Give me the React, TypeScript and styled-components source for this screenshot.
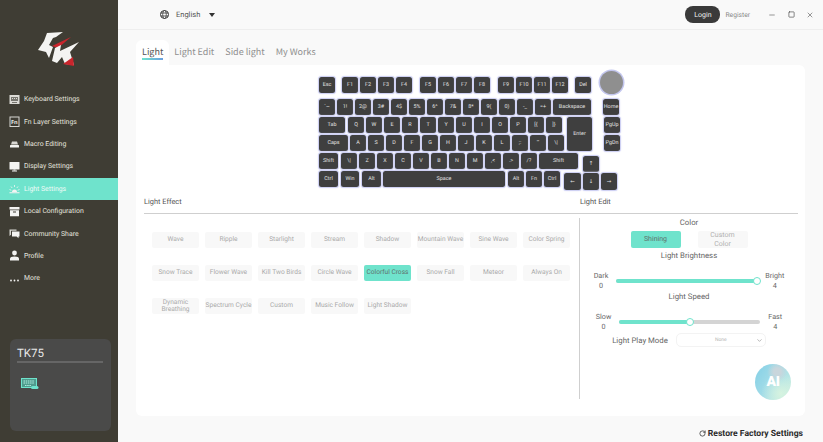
import React from 'react';
import styled, { createGlobalStyle } from 'styled-components';
import { Minus, Square, X, RotateCw, ChevronDown } from 'lucide-react';

const GlobalStyle = createGlobalStyle`
  html, body { margin: 0; padding: 0; background: #f9f9f9; }
  body {
    font-family: Roboto, "DejaVu Sans", sans-serif;
    text-rendering: geometricPrecision;
  }
  button { font-family: inherit; text-rendering: inherit; }
  * { box-sizing: border-box; }
`;

const Page = styled.div`
  display: flex;
  width: 823px;
  height: 442px;
  overflow: hidden;
`;

/* sidebar */
const Sidebar = styled.aside`
  display: flex;
  flex-direction: column;
  flex: none;
  width: 118px;
  height: 100%;
  background: #3f3d34;
  padding-bottom: 11px;
`;

const LogoBox = styled.div`
  display: flex;
  justify-content: center;
  height: 88px;
  padding-top: 31px;
`;

const Nav = styled.nav`
  display: flex;
  flex-direction: column;
`;

const NavItem = styled.div<{ $active?: boolean }>`
  display: flex;
  align-items: center;
  gap: 4px;
  height: 22.4px;
  padding-left: 9px;
  font-size: 6.9px;
  color: ${p => (p.$active ? '#f2fbf8' : '#e4e3de')};
  background: ${p => (p.$active ? '#6fe3cc' : 'transparent')};
  svg { flex: none; }
`;

const DeviceCard = styled.div`
  margin: auto 7px 0 10px;
  height: 92px;
  padding: 6px 7px;
  background: #4a4a49;
  border-radius: 6px;
`;

const DeviceName = styled.div`
  font-size: 11.5px;
  line-height: 16px;
  color: #e8e8e8;
  padding-bottom: 0;
  border-bottom: 2px solid #666;
  margin-bottom: 15px;
  margin-right: 1px;
`;

/* main column */
const Main = styled.main`
  display: flex;
  flex-direction: column;
  flex: 1;
  min-width: 0;
`;

const TopBar = styled.header`
  display: flex;
  align-items: center;
  flex: none;
  height: 30px;
  padding: 0 9px 0 42px;
  border-bottom: 1px solid #eeeeee;
`;

const LangText = styled.span`
  margin-left: 7px;
  font-size: 7.5px;
  color: #555;
`;

const Caret = styled.span`
  margin-left: 9px;
  border-left: 3px solid transparent;
  border-right: 3px solid transparent;
  border-top: 4px solid #333;
`;

const LoginButton = styled.button`
  margin-left: auto;
  width: 35px;
  height: 17px;
  padding: 0;
  border: 0;
  border-radius: 8px;
  background: #3a3a3a;
  color: #f0f0f0;
  font-size: 7px;
`;

const RegisterText = styled.span`
  margin-left: 5px;
  font-size: 6.7px;
  color: #888;
`;

const WindowControls = styled.div`
  display: flex;
  align-items: center;
  gap: 11.5px;
  margin-left: 18px;
  color: #333;
`;

const TabBar = styled.div`
  display: flex;
  flex: none;
  height: 35px;
  padding: 10px 0 0 18px;
`;

const Tab = styled.div<{ $active?: boolean }>`
  position: relative;
  padding: 5px 6px 0;
  height: 25px;
  margin-right: -1px;
  font-family: "Noto Sans CJK SC", "Noto Sans", sans-serif;
  font-size: 9px;
  line-height: 13px;
  color: ${p => (p.$active ? '#555' : '#8f8f8f')};
  background: ${p => (p.$active ? '#fff' : 'transparent')};
  border-radius: 6px 6px 0 0;
  ${p =>
    p.$active &&
    `&::after {
      content: "";
      position: absolute;
      left: 6px;
      right: 6px;
      top: 18px;
      height: 1.5px;
      background: linear-gradient(90deg, #6fe3cc, #6a9fe0);
    }`}
`;

const Panel = styled.section`
  display: flex;
  flex-direction: column;
  flex: 1;
  margin: 0 18px 0 18px;
  padding-top: 12px;
  background: #fff;
  border-radius: 0 6px 6px 6px;
  position: relative;
`;

const Footer = styled.footer`
  display: flex;
  justify-content: flex-end;
  align-items: center;
  gap: 2px;
  flex: none;
  height: 26px;
  padding: 9px 20px 0 0;
  font-size: 8.6px;
  font-weight: 700;
  color: #2b2b2b;
`;

/* keyboard */
const Keyboard = styled.div`
  display: flex;
  flex-direction: column;
  flex: none;
  margin-left: 183px;
  width: 305px;
`;

const KeyRow = styled.div<{ $mb?: number }>`
  display: flex;
  gap: 2px;
  height: 16px;
  margin-bottom: ${p => p.$mb ?? 2}px;
`;

const Key = styled.div<{ $w: number; $h: number; $ml: number; $mt: number }>`
  display: flex;
  align-items: center;
  justify-content: center;
  flex: none;
  width: ${p => p.$w}px;
  height: ${p => p.$h}px;
  margin-left: ${p => p.$ml}px;
  margin-top: ${p => p.$mt}px;
  background: #3f3f3f;
  border-radius: 2.5px;
  box-shadow: 0 0 0 1px #cfd1f3, 0 0 2px 1px #e4e5f8;
  color: #e2e2e2;
  font-size: 5.4px;
  white-space: nowrap;
`;

const Knob = styled.div`
  flex: none;
  width: 23px;
  height: 23px;
  margin: -6px 0 0 7px;
  border-radius: 50%;
  background: #8f8f8f;
  box-shadow: 0 0 0 1.5px #c3c6ee;
`;

/* effects and edit area */
const Section = styled.div`
  display: flex;
  flex-direction: column;
  flex: 1;
  margin: 6px 7px 0 8px;
`;

const SectionHeader = styled.div`
  display: grid;
  grid-template-columns: 436px 1fr;
  flex: none;
  height: 19px;
  border-bottom: 1px solid #cfcfcf;
  font-size: 7.4px;
  line-height: 14px;
  color: #555;
`;

const SectionBody = styled.div`
  display: grid;
  grid-template-columns: 435px 1fr;
  height: 185px;
  padding-top: 4px;
`;

const EffectGrid = styled.div`
  display: grid;
  grid-template-columns: repeat(8, 47px);
  grid-auto-rows: 16px;
  column-gap: 6px;
  row-gap: 17px;
  align-content: start;
  padding: 14px 0 0 8px;
`;

const EffectButton = styled.button<{ $active?: boolean; $wrap?: boolean }>`
  padding: 0;
  border: 0;
  border-radius: 2px;
  background: ${p => (p.$active ? '#6fe3cc' : '#f8f8f8')};
  color: ${p => (p.$active ? '#5f6f6b' : '#a9a9a9')};
  font-size: 6.6px;
  line-height: 7.5px;
  white-space: ${p => (p.$wrap ? 'normal' : 'nowrap')};
`;

const EditPane = styled.div`
  display: flex;
  flex-direction: column;
  align-items: center;
  border-left: 1px solid #cfcfcf;
`;

const EditTitle = styled.div<{ $mt?: number }>`
  height: 10px;
  margin-top: ${p => p.$mt ?? 0}px;
  font-size: 7.8px;
  line-height: 10px;
  color: #666;
`;

const ModeRow = styled.div`
  display: flex;
  gap: 17px;
  margin-top: 3px;
`;

const ModeButton = styled.button<{ $active?: boolean }>`
  width: 50px;
  height: 17px;
  padding: 0 10px;
  border: 0;
  border-radius: 2px;
  background: ${p => (p.$active ? '#6fe3cc' : '#f8f8f8')};
  color: ${p => (p.$active ? '#5f6f6b' : '#b0b0b0')};
  font-size: 7px;
  line-height: 8.5px;
`;

const SliderRow = styled.div`
  display: flex;
  align-items: center;
  gap: 8px;
  margin-top: 10px;
`;

const SliderLabel = styled.div`
  font-size: 7.2px;
  line-height: 10px;
  color: #666;
  text-align: center;
`;

const Track = styled.div`
  position: relative;
  width: 141px;
  height: 4px;
  border-radius: 2px;
  background: #d4d4d4;
`;

const TrackFill = styled.div`
  height: 100%;
  border-radius: 2px;
  background: #6fe3cc;
`;

const Thumb = styled.div`
  position: absolute;
  top: -2px;
  width: 8px;
  height: 8px;
  margin-left: -4px;
  border-radius: 50%;
  border: 1px solid #6fe3cc;
  background: #fff;
`;

const PlayRow = styled.div`
  display: flex;
  align-items: center;
  gap: 8px;
  margin-top: 1px;
  font-size: 7.8px;
  color: #666;
`;

const PlaySelect = styled.div`
  position: relative;
  display: flex;
  align-items: center;
  justify-content: center;
  width: 90px;
  height: 14px;
  border: 1px solid #f3f3f3;
  border-radius: 5px;
  font-size: 5px;
  color: #b5b5b5;
  svg { position: absolute; right: 2px; top: 3px; color: #888; }
`;

const AiOrb = styled.div`
  position: absolute;
  left: 619px;
  top: 299px;
  display: flex;
  align-items: center;
  justify-content: center;
  width: 36px;
  height: 36px;
  border-radius: 50%;
  background: radial-gradient(circle at 62% 22%, #c9d6dc 0 10%, transparent 28%),
    radial-gradient(circle at 72% 82%, #d6f3e0 0, transparent 50%),
    linear-gradient(120deg, #83cfe6, #a9dfe8 55%, #cdf0df);
  color: #fff;
  font-size: 14px;
  font-weight: 900;
  letter-spacing: -0.5px;
`;

/* icons */
const NavIcon = ({ children }: { children: React.ReactNode }) => (
  <svg width="11" height="11" viewBox="0 0 11 11" fill="#f4f4f2">
    {children}
  </svg>
);

const navItems: { label: string; icon: React.ReactNode; active?: boolean }[] = [
  {
    label: 'Keyboard Settings',
    icon: (
      <NavIcon>
        <rect x="0.5" y="1" width="10" height="9" fill="#dcdbd6" />
        <path d="M2 3h7v4H2z M3 8h5v1H3z" fill="#77766f" />
        <path d="M3 4h1v1H3z M5 4h1v1H5z M7 4h1v1H7z" fill="#dcdbd6" />
      </NavIcon>
    ),
  },
  {
    label: 'Fn Layer Settings',
    icon: (
      <NavIcon>
        <rect x="1" y="1" width="9" height="9.5" fill="none" stroke="#d8d7d2" strokeWidth="1" />
        <text x="2" y="8" fontSize="5.5" fontWeight="700" fill="#e8e7e2" fontFamily="Noto Sans">Fn</text>
      </NavIcon>
    ),
  },
  {
    label: 'Macro Editing',
    icon: (
      <NavIcon>
        <path d="M3 3.5h5l1 3H2z" fill="#d8d7d2" />
        <rect x="1" y="7" width="9" height="2.5" rx="0.5" />
      </NavIcon>
    ),
  },
  {
    label: 'Display Settings',
    icon: (
      <NavIcon>
        <rect x="0.5" y="1" width="10" height="7.5" rx="0.5" />
        <rect x="4.5" y="8.5" width="2" height="1" />
        <rect x="3" y="9.5" width="5" height="1" />
      </NavIcon>
    ),
  },
  {
    label: 'Light Settings',
    active: true,
    icon: (
      <NavIcon>
        <path d="M3 9a2.5 2.5 0 0 1 5 0z M0.5 9.2h10v1h-10z" />
        <path d="M5.5 2v2 M2 3.5l1.2 1.5 M9 3.5L7.8 5 M0.5 6.5l1.8.8 M10.5 6.5l-1.8.8" stroke="#f4f4f2" strokeWidth="0.8" />
      </NavIcon>
    ),
  },
  {
    label: 'Local Configuration',
    icon: (
      <NavIcon>
        <rect x="0.5" y="1" width="10" height="2.5" />
        <path d="M1 4.3h9v6H1z M4 5.5v1h3v-1z" fillRule="evenodd" />
      </NavIcon>
    ),
  },
  {
    label: 'Community Share',
    icon: (
      <NavIcon>
        <path d="M0.5 1.5h7v1.2H2v4L0.5 8z" fill="#d8d7d2" />
        <path d="M3 3.5h7.5v5h-1v1.7L7.6 8.5H3z" />
      </NavIcon>
    ),
  },
  {
    label: 'Profile',
    icon: (
      <NavIcon>
        <circle cx="5.5" cy="3" r="2.4" />
        <path d="M1 10.5V8.6c0-1.400 1.600-2.200 4.500-2.200s4.500.8 4.500 2.200v1.900z" />
      </NavIcon>
    ),
  },
  {
    label: 'More',
    icon: (
      <NavIcon>
        <circle cx="2" cy="7.5" r="0.9" />
        <circle cx="5.5" cy="7.5" r="0.9" />
        <circle cx="9" cy="7.5" r="0.9" />
      </NavIcon>
    ),
  },
];

const Logo = () => (
  <svg width="42" height="36" viewBox="0 0 42 36">
    <path d="M9 2 L25 1 L18 6 L15 7 L11 14 L15 16 L11 27 L8 21 L0 19 L6 10 Z" fill="#f4f4f2" />
    <path d="M14 15 L33 6 L20 17 Z" fill="#c9252c" />
    <path d="M17 17 L23 14 L22 20 L41 11 L32 21 L36 34 L27 33 L24 26 L19 32 L14 30 Z" fill="#f4f4f2" />
    <path d="M25 33 L35 26 L36 35 Z" fill="#c9252c" />
  </svg>
);

const DeviceIcon = () => (
  <svg width="18" height="11" viewBox="0 0 18 11" style={{ marginLeft: 4, display: 'block' }}>
    <rect x="0.5" y="0.5" width="15" height="9" fill="#4f9c8d" stroke="#6fe3cc" />
    <path d="M2.5 3h11 M2.5 5h11 M4 7.500h6" stroke="#b5efe3" strokeWidth="1" strokeDasharray="1.5 .7" />
    <rect x="10" y="8" width="7.5" height="3" rx="1.5" fill="#6fe3cc" />
  </svg>
);

const Globe = () => (
  <svg width="9" height="9" viewBox="0 0 9 9" fill="none" stroke="#3a3a3a">
    <circle cx="4.5" cy="4.5" r="4" strokeWidth="1" />
    <ellipse cx="4.5" cy="4.5" rx="1.8" ry="4" strokeWidth="0.8" />
    <path d="M0.5 3h8 M0.5 6h8" strokeWidth="0.8" />
  </svg>
);

/* keyboard data */
type KeyDef = { l: string; w?: number; h?: number; ml?: number; mt?: number };

const chars = (labels: string[]): KeyDef[] => labels.map(l => ({ l }));

const functionRow: KeyDef[] = [
  { l: 'Esc' },
  { l: 'F1', ml: 5 },
  ...chars(['F2', 'F3', 'F4']),
  { l: 'F5', ml: 6 },
  ...chars(['F6', 'F7', 'F8']),
  { l: 'F9', ml: 6 },
  ...chars(['F10', 'F11', 'F12']),
  { l: 'Del', ml: 5 },
];

const keyRows: KeyDef[][] = [
  [
    ...chars(['`~', '1!', '2@', '3#', '4$', '5%', '6^', '7&', '8*', '9(', '0)', '-_', '=+']),
    { l: 'Backspace', w: 38 },
    { l: 'Home', ml: 10 },
  ],
  [
    { l: 'Tab', w: 26 },
    { l: 'Q', ml: 1 },
    ...chars(['W', 'E', 'R', 'T', 'Y', 'U', 'I', 'O', 'P', '[{', ']}']),
    { l: 'Enter', w: 25, h: 34, ml: 3 },
    { l: 'PgUp', ml: 10 },
  ],
  [
    { l: 'Caps', w: 29 },
    { l: 'A', ml: 0 },
    ...chars(['S', 'D', 'F', 'G', 'H', 'J', 'K', 'L', ';:', '\'"', '\\|']),
    { l: 'PgDn', ml: 38 },
  ],
  [
    { l: 'Shift', w: 19 },
    { l: '\\|', ml: 1 },
    ...chars(['Z', 'X', 'C', 'V', 'B', 'N', 'M', ',<', '.>', '/?']),
    { l: 'Shift', w: 39 },
    { l: '↑', ml: 3, mt: 3 },
  ],
  [
    { l: 'Ctrl', w: 19 },
    { l: 'Win', w: 18, ml: 1 },
    { l: 'Alt', w: 19, ml: 1 },
    { l: 'Space', w: 122 },
    { l: 'Alt', ml: 1 },
    ...chars(['Fn', 'Ctrl']),
    { l: '←', w: 17, h: 17, ml: 2, mt: 2 },
    { l: '↓', h: 17, mt: 2 },
    { l: '→', h: 17, mt: 2 },
  ],
];

const renderKey = (k: KeyDef, i: number) => (
  <Key key={i} $w={k.w ?? 16} $h={k.h ?? 16} $ml={k.ml ?? 0} $mt={k.mt ?? 0}>
    {k.l}
  </Key>
);

const effects = [
  'Wave', 'Ripple', 'Starlight', 'Stream', 'Shadow', 'Mountain Wave', 'Sine Wave', 'Color Spring',
  'Snow Trace', 'Flower Wave', 'Kill Two Birds', 'Circle Wave', 'Colorful Cross', 'Snow Fall', 'Meteor', 'Always On',
  'Dynamic Breathing', 'Spectrum Cycle', 'Custom', 'Music Follow', 'Light Shadow',
];

const Slider = ({ left, right, percent }: { left: string; right: string; percent: number }) => (
  <SliderRow>
    <SliderLabel>{left}<br />0</SliderLabel>
    <Track>
      <TrackFill style={{ width: `${percent}%` }} />
      <Thumb style={{ left: `${percent}%` }} />
    </Track>
    <SliderLabel>{right}<br />4</SliderLabel>
  </SliderRow>
);

export default function App() {
  return (
    <Page>
      <GlobalStyle />
      <Sidebar>
        <LogoBox><Logo /></LogoBox>
        <Nav>
          {navItems.map(item => (
            <NavItem key={item.label} $active={item.active}>
              {item.icon}
              {item.label}
            </NavItem>
          ))}
        </Nav>
        <DeviceCard>
          <DeviceName>TK75</DeviceName>
          <DeviceIcon />
        </DeviceCard>
      </Sidebar>
      <Main>
        <TopBar>
          <Globe />
          <LangText>English</LangText>
          <Caret />
          <LoginButton>Login</LoginButton>
          <RegisterText>Register</RegisterText>
          <WindowControls>
            <Minus size={8} strokeWidth={1.5} />
            <Square size={7} strokeWidth={2} />
            <X size={8} strokeWidth={1.5} />
          </WindowControls>
        </TopBar>
        <TabBar>
          <Tab $active>Light</Tab>
          <Tab>Light Edit</Tab>
          <Tab>Side light</Tab>
          <Tab>My Works</Tab>
        </TabBar>
        <Panel>
          <Keyboard>
            <KeyRow $mb={6}>
              {functionRow.map(renderKey)}
              <Knob />
            </KeyRow>
            {keyRows.map((row, i) => (
              <KeyRow key={i}>{row.map(renderKey)}</KeyRow>
            ))}
          </Keyboard>
          <Section>
            <SectionHeader>
              <span>Light Effect</span>
              <span>Light Edit</span>
            </SectionHeader>
            <SectionBody>
              <EffectGrid>
                {effects.map(name => (
                  <EffectButton
                    key={name}
                    $active={name === 'Colorful Cross'}
                    $wrap={name === 'Dynamic Breathing'}
                  >
                    {name}
                  </EffectButton>
                ))}
              </EffectGrid>
              <EditPane>
                <EditTitle>Color</EditTitle>
                <ModeRow>
                  <ModeButton $active>Shining</ModeButton>
                  <ModeButton>Custom Color</ModeButton>
                </ModeRow>
                <EditTitle $mt={3}>Light Brightness</EditTitle>
                <Slider left="Dark" right="Bright" percent={100} />
                <EditTitle $mt={1}>Light Speed</EditTitle>
                <Slider left="Slow" right="Fast" percent={50} />
                <PlayRow>
                  Light Play Mode
                  <PlaySelect>None<ChevronDown size={7} /></PlaySelect>
                </PlayRow>
              </EditPane>
            </SectionBody>
          </Section>
          <AiOrb>AI</AiOrb>
        </Panel>
        <Footer>
          <RotateCw size={7} strokeWidth={2.5} />
          Restore Factory Settings
        </Footer>
      </Main>
    </Page>
  );
}
